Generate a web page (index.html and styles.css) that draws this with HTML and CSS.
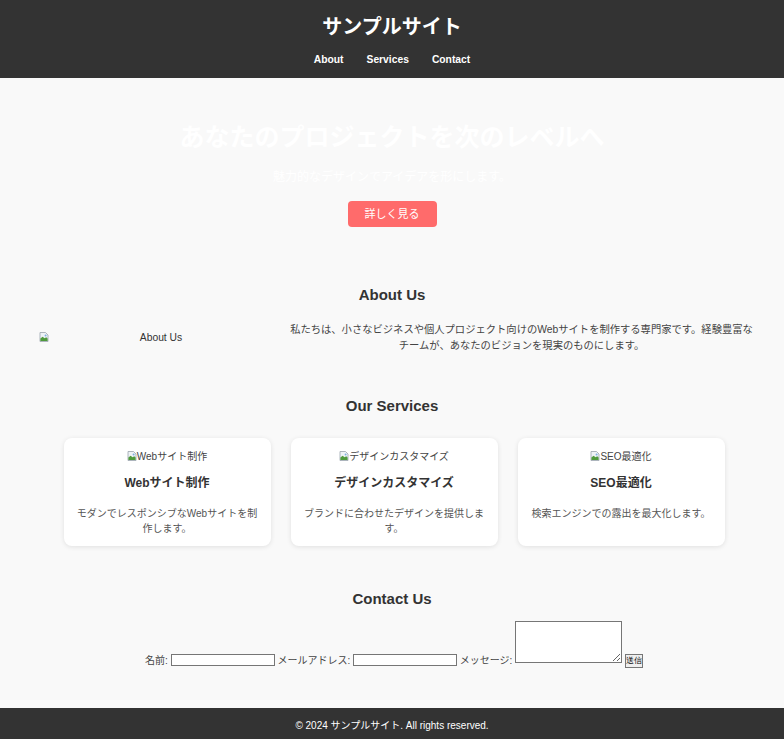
FILE: index.html
```html
<!DOCTYPE html>
<html lang="ja">
<head>
    <meta charset="UTF-8">
    <meta name="viewport" content="width=device-width, initial-scale=1.0">
    <title>サンプルサイト</title>
    <link rel="stylesheet" href="styles.css">
</head>
<body>
    <header class="site-header">
        <h1>サンプルサイト</h1>
        <nav>
            <ul class="nav-list">
                <li><a href="#about">About</a></li>
                <li><a href="#services">Services</a></li>
                <li><a href="#contact">Contact</a></li>
            </ul>
        </nav>
    </header>

    <section class="hero">
        <h2>あなたのプロジェクトを次のレベルへ</h2>
        <p>魅力的なデザインでアイデアを形にします。</p>
        <a href="#services" class="cta-btn">詳しく見る</a>
    </section>

    <section id="about" class="section about">
        <h2>About Us</h2>
        <div class="about-row">
            <div class="about-img">
                <svg class="broken" viewBox="0 0 10 10"><path d="M1 .5h5.5l2.5 2.5v6.5h-8z" fill="#eef2f6" stroke="#9aa3ad" stroke-width=".8"/><path d="M1.4 9.1v-2.6l2.2-1.8 2 1.6 1.6-1 1.4 1.2v2.6z" fill="#4f9a3c"/><circle cx="6.6" cy="3.4" r="1" fill="#7fb0e0"/></svg>
                <span class="alt-text">About Us</span>
            </div>
            <p>私たちは、小さなビジネスや個人プロジェクト向けのWebサイトを制作する専門家です。経験豊富なチームが、あなたのビジョンを現実のものにします。</p>
        </div>
    </section>

    <section id="services" class="section services">
        <h2>Our Services</h2>
        <div class="service-grid">
            <div class="card">
                <div class="card-img"><svg class="broken" viewBox="0 0 10 10"><path d="M1 .5h5.5l2.5 2.5v6.5h-8z" fill="#eef2f6" stroke="#9aa3ad" stroke-width=".8"/><path d="M1.4 9.1v-2.6l2.2-1.8 2 1.6 1.6-1 1.4 1.2v2.6z" fill="#4f9a3c"/><circle cx="6.6" cy="3.4" r="1" fill="#7fb0e0"/></svg>Webサイト制作</div>
                <h3>Webサイト制作</h3>
                <p>モダンでレスポンシブなWebサイトを制作します。</p>
            </div>
            <div class="card">
                <div class="card-img"><svg class="broken" viewBox="0 0 10 10"><path d="M1 .5h5.5l2.5 2.5v6.5h-8z" fill="#eef2f6" stroke="#9aa3ad" stroke-width=".8"/><path d="M1.4 9.1v-2.6l2.2-1.8 2 1.6 1.6-1 1.4 1.2v2.6z" fill="#4f9a3c"/><circle cx="6.6" cy="3.4" r="1" fill="#7fb0e0"/></svg>デザインカスタマイズ</div>
                <h3>デザインカスタマイズ</h3>
                <p>ブランドに合わせたデザインを提供します。</p>
            </div>
            <div class="card">
                <div class="card-img"><svg class="broken" viewBox="0 0 10 10"><path d="M1 .5h5.5l2.5 2.5v6.5h-8z" fill="#eef2f6" stroke="#9aa3ad" stroke-width=".8"/><path d="M1.4 9.1v-2.6l2.2-1.8 2 1.6 1.6-1 1.4 1.2v2.6z" fill="#4f9a3c"/><circle cx="6.6" cy="3.4" r="1" fill="#7fb0e0"/></svg>SEO最適化</div>
                <h3>SEO最適化</h3>
                <p>検索エンジンでの露出を最大化します。</p>
            </div>
        </div>
    </section>

    <section id="contact" class="section contact">
        <h2>Contact Us</h2>
        <form class="contact-form">
            <label for="name">名前:</label> <input type="text" id="name"> <label for="email">メールアドレス:</label> <input type="email" id="email"> <label for="message">メッセージ:</label> <textarea id="message"></textarea> <button type="submit">送信</button>
        </form>
    </section>

    <footer class="site-footer">
        <p>&copy; 2024 サンプルサイト. All rights reserved.</p>
    </footer>
</body>
</html>
```

FILE: styles.css
```css
* {
    box-sizing: border-box;
}

body {
    margin: 0;
    font-family: "Liberation Sans", "Noto Sans CJK JP", sans-serif;
    background: #f9f9f9;
    color: #333;
    font-size: 11px;
}

.site-header {
    background: #333;
    color: #fff;
    text-align: center;
    padding: 15px 0 12px;
}

.site-header h1 {
    margin: 0;
    font-size: 20px;
    line-height: 24px;
}

.nav-list {
    list-style: none;
    margin: 14px 0 0;
    padding: 0;
    display: flex;
    justify-content: center;
    gap: 23px;
}

.nav-list li {
    line-height: 13px;
}

.nav-list a {
    color: #fff;
    text-decoration: none;
    font-weight: bold;
    font-size: 10.3px;
}

.hero {
    text-align: center;
    color: #fff;
    padding: 44px 20px 36px;
}

.hero h2 {
    margin: 0;
    font-size: 25px;
    line-height: 30px;
}

.hero p {
    margin: 18px 0 16px;
    font-size: 12px;
    line-height: 15px;
}

.cta-btn {
    display: inline-block;
    background: #ff6b6b;
    color: #fff;
    text-decoration: none;
    font-size: 11px;
    line-height: 26px;
    width: 89px;
    border-radius: 4px;
}

.section {
    text-align: center;
    padding: 22px 0;
}

.section h2 {
    margin: 0 0 17px;
    font-size: 15px;
    line-height: 19px;
}

.about {
    padding-bottom: 20px;
}

.about h2 {
    margin-bottom: 18px;
}

.about-row {
    display: flex;
    align-items: center;
    gap: 7px;
    padding: 0 31px 0 39px;
}

.about-img {
    width: 244px;
    flex-shrink: 0;
    position: relative;
    height: 14px;
    line-height: 14px;
    font-size: 10.3px;
}

.about-img .broken {
    position: absolute;
    left: 0;
    top: 1px;
}

.broken {
    width: 10px;
    height: 10px;
    vertical-align: -1px;
}

.about-row p {
    flex: 1;
    margin: 0;
    font-size: 10.3px;
    line-height: 16px;
    color: #444;
}

.services h2 {
    margin-bottom: 0;
}

.service-grid {
    display: grid;
    grid-template-columns: repeat(3, 207px);
    gap: 20px;
    justify-content: center;
    padding-left: 4px;
    margin-top: 23px;
}

.card {
    background: #fff;
    border-radius: 8px;
    box-shadow: 0 1px 5px rgba(0, 0, 0, 0.1);
    padding: 12px 12px;
    height: 108px;
}

.card-img {
    font-size: 10px;
    line-height: 13px;
    color: #444;
}

.card h3 {
    margin: 12px 0 15px;
    font-size: 12px;
    line-height: 16px;
}

.card p {
    margin: 0;
    font-size: 10px;
    color: #555;
    line-height: 15px;
}

.contact {
    padding-top: 21px;
    padding-bottom: 40px;
}

.contact h2 {
    margin-bottom: 13px;
}

.contact-form {
    color: #444;
    font-size: 10px;
    padding-left: 4px;
}

.contact-form input {
    width: 104px;
    height: 12px;
    border: 1px solid #767676;
    background: #fff;
    padding: 0;
    vertical-align: 0;
}

.contact-form textarea {
    width: 107px;
    height: 42px;
    border: 1px solid #767676;
    background: #fff;
    padding: 0;
    vertical-align: 1px;
    resize: both;
}

.contact-form button {
    width: 18px;
    height: 14px;
    padding: 0;
    font-size: 8px;
    line-height: 12px;
    border: 1px solid #767676;
    background: #efefef;
    color: #000;
    vertical-align: 1px;
    overflow: hidden;
    white-space: nowrap;
}

.site-footer {
    background: #333;
    color: #fff;
    text-align: center;
    padding: 11px 0 7px;
}

.site-footer p {
    margin: 0;
    font-size: 10px;
    line-height: 13px;
}
```
